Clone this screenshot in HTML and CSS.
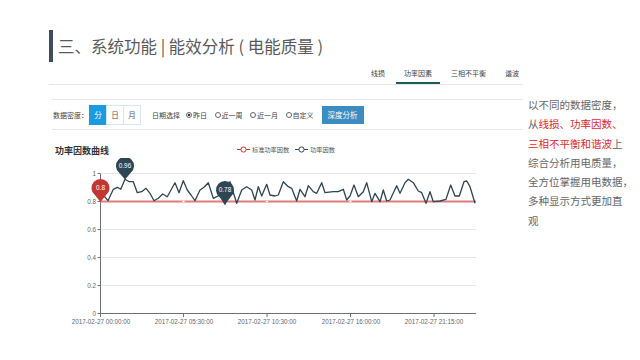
FILE: index.html
```html
<!DOCTYPE html>
<html lang="zh">
<head>
  <meta charset="UTF-8">
  <title>能效分析</title>
  <link rel="stylesheet" href="styles.css">
</head>
<body>
  <h1 class="title">三、系统功能 | 能效分析 ( 电能质量 )</h1>
  <div class="main">
    <section class="panel">
      <nav class="tabs">
        <span class="tab">线损</span>
        <span class="tab active">功率因素</span>
        <span class="tab">三相不平衡</span>
        <span class="tab">谐波</span>
      </nav>
      <div class="toolbar">
        <span class="label">数据密度：</span>
        <div class="density">
          <span class="seg on">分</span><span class="seg">日</span><span class="seg">月</span>
        </div>
        <span class="label date-label">日期选择</span>
        <span class="radio checked">昨日</span>
        <span class="radio">近一周</span>
        <span class="radio">近一月</span>
        <span class="radio">自定义</span>
        <button class="btn-analyze">深度分析</button>
      </div>
      <div class="chart">
        <div class="chart-head">
          <h3>功率因数曲线</h3>
          <div class="legend">
            <span class="legend-item">
              <svg width="13" height="7" viewBox="0 0 13 7"><line x1="0" y1="3.5" x2="13" y2="3.5" stroke="#c23531"/><circle cx="6.5" cy="3.5" r="2.6" fill="#fff" stroke="#c23531"/></svg>
              标准功率因数
            </span>
            <span class="legend-item">
              <svg width="13" height="7" viewBox="0 0 13 7"><line x1="0" y1="3.5" x2="13" y2="3.5" stroke="#2f4554"/><circle cx="6.5" cy="3.5" r="2.6" fill="#fff" stroke="#2f4554"/></svg>
              功率因数
            </span>
          </div>
        </div>
        <svg class="plot" width="474" height="177" viewBox="49 158 474 177">
          <g stroke="#e6e6e6" stroke-width="1">
            <line x1="101" y1="173.5" x2="476" y2="173.5"/>
            <line x1="101" y1="229.5" x2="476" y2="229.5"/>
            <line x1="101" y1="257.5" x2="476" y2="257.5"/>
            <line x1="101" y1="285.5" x2="476" y2="285.5"/>
          </g>
          <g stroke="#6e7079" stroke-width="1" fill="none">
            <path d="M100.5 173.5 V313.5 H476"/>
            <path d="M97.5 173.5 H100 M97.5 201.5 H100 M97.5 229.5 H100 M97.5 257.5 H100 M97.5 285.5 H100 M97.5 313.5 H100"/>
            <path d="M100.5 313.5 V317 M183.5 313.5 V317 M267 313.5 V317 M350.5 313.5 V317 M434 313.5 V317"/>
          </g>
          <g class="ylabels" text-anchor="end">
            <text x="96" y="175.7">1</text>
            <text x="96" y="203.7">0.8</text>
            <text x="96" y="231.7">0.6</text>
            <text x="96" y="259.7">0.4</text>
            <text x="96" y="287.7">0.2</text>
            <text x="96" y="315.7">0</text>
          </g>
          <g class="xlabels" text-anchor="middle">
            <text x="101" y="323.5">2017-02-27 00:00:00</text>
            <text x="184" y="323.5">2017-02-27 05:30:00</text>
            <text x="267" y="323.5">2017-02-27 10:30:00</text>
            <text x="351" y="323.5">2017-02-27 16:00:00</text>
            <text x="434" y="323.5">2017-02-27 21:15:00</text>
          </g>
          <line x1="100" y1="201.5" x2="476" y2="201.5" stroke="#e07c7a" stroke-width="2"/>
          <g fill="#fff" stroke="#f0b4b2" stroke-width="0.6">
            <circle cx="183.5" cy="201.5" r="1.2"/>
            <circle cx="267" cy="201.5" r="1.2"/>
            <circle cx="350.5" cy="201.5" r="1.2"/>
          </g>
          <polyline fill="none" stroke="#2f4554" stroke-width="1.3" stroke-linejoin="round"
            points="100,190 104,196 108,200.7 113.3,189.3 117.3,187.3 120.7,189.3 125,179.3 129.3,181.7 133.3,181.7 137.3,192.7 141.7,191.7 146,188.3 150,193.3 154,200.7 158.3,198.3 162.7,194 167.3,196.7 171,190 175,182.7 179,192.7 183.3,180.7 187.3,190 191,195 195,200.7 200,190 204,187.3 208.3,182.7 213.3,198.3 216.7,196.7 220,195 225,204.3 230,181.7 236.7,203.3 241.7,190 246.7,186.7 251.7,190 255,200 258.3,186.7 261.7,196 266.7,184.3 270,195 275,196 278.3,195 283.3,181.7 288.3,186.7 291.7,188.3 296.7,201 300,189.3 305,196.7 308.3,185.7 313.3,191.7 316.7,193.3 321.7,182.7 325,192.7 333.3,191.7 338.3,191.7 343.3,189.3 346.7,200 350,196 354,185 358.3,196.7 363.3,191.7 366.7,182.7 371.7,201.7 375,193.3 380,201.7 383.3,190 386.7,201 390,200 396.7,185.7 400,193.3 405,182.7 408.3,179.3 413.3,182.7 418.3,191 421.7,192.7 426,203.3 430,191.7 433.3,201.7 440,201 446,199.3 450.7,185 455,196 459.3,196 464,181.7 466.7,181 470,186.7 475,203.3"/>
          <g class="pin">
            <path d="M100.5 202 L94.9 195 A9 9 0 1 1 106.1 195 Z" fill="#c23531"/>
            <text x="100.5" y="190.4">0.8</text>
          </g>
          <g class="pin">
            <path d="M125 179.5 L119.4 173 A9 9 0 1 1 130.6 173 Z" fill="#2f4554"/>
            <text x="125" y="168.4">0.96</text>
          </g>
          <g class="pin">
            <path d="M225 204.5 L219.4 197 A9 9 0 1 1 230.6 197 Z" fill="#2f4554"/>
            <text x="225" y="192.4">0.78</text>
          </g>
        </svg>
      </div>
    </section>
    <p class="note">
      以不同的数据密度，<br>
      从<span class="hl">线损、功率因数、</span><br>
      <span class="hl">三相不平衡和谐波</span>上<br>
      综合分析用电质量，<br>
      全方位掌握用电数据，<br>
      多种显示方式更加直<br>
      观
    </p>
  </div>
</body>
</html>
```

FILE: styles.css
```css
body {
  margin: 0;
  background-color: #fff;
  color: #555;
  font-family: "Noto Sans CJK SC", "Noto Sans", sans-serif;
}
.title {
  margin: 30px 0 0 49px;
  height: 32px;
  padding-left: 5px;
  border-left: 4px solid #3f4d5f;
  font-size: 16.5px;
  font-weight: normal;
  line-height: 32px;
  color: #5a5a5a;
}
.main {
  display: flex;
  margin-left: 49px;
}
.panel {
  width: 474px;
  flex-shrink: 0;
}
.tabs {
  display: flex;
  justify-content: flex-end;
  border-bottom: 1px solid #e6e6e6;
  font-size: 7px;
}
.tab {
  box-sizing: border-box;
  height: 22px;
  padding: 0 8px;
  margin-left: 3px;
  line-height: 22px;
  color: #444;
}
.tab:last-child {
  padding-right: 4px;
}
.tab.active {
  border-bottom: 2px solid #1d5c5a;
}
.toolbar {
  display: flex;
  align-items: center;
  height: 29px;
  margin: 14px 0 0 3px;
  padding-left: 1px;
  border-top: 1px solid #e8e8e8;
  border-bottom: 1px solid #e8e8e8;
  font-size: 7px;
  color: #444;
}
.density {
  display: flex;
  margin-left: 1px;
}
.seg {
  box-sizing: border-box;
  width: 18px;
  height: 20px;
  margin-left: -1px;
  border: 1px solid #d3e7f5;
  display: flex;
  align-items: center;
  justify-content: center;
  font-size: 7.5px;
  color: #555;
}
.seg:first-child {
  margin-left: 0;
}
.seg.on {
  background-color: #1a9be0;
  border-color: #1a9be0;
  color: #fff;
}
.date-label {
  margin-left: 11px;
}
.radio {
  display: flex;
  align-items: center;
  gap: 1px;
  margin-left: 7.5px;
}
.date-label + .radio {
  margin-left: 6px;
}
.radio::before {
  content: "";
  box-sizing: border-box;
  width: 6px;
  height: 6px;
  border: 1px solid #666;
  border-radius: 50%;
  background-color: #fff;
}
.radio.checked::before {
  background: radial-gradient(circle, #333 0 1.4px, #fff 1.6px);
}
.btn-analyze {
  height: 18px;
  margin-left: 8px;
  padding: 0 6px;
  border: none;
  background-color: #3b8cc0;
  color: #fff;
  font-family: inherit;
  font-size: 7.5px;
}
.chart-head {
  display: grid;
  grid-template-columns: 1fr auto 1fr;
  align-items: center;
  height: 14px;
  margin-top: 14px;
}
.chart-head h3 {
  margin: 0;
  padding-left: 6px;
  font-size: 9px;
  font-weight: bold;
  line-height: 14px;
  color: #333;
}
.legend {
  display: flex;
  align-items: center;
  gap: 6px;
  align-self: start;
  margin-top: 1px;
  font-size: 6.2px;
  color: #555;
}
.legend-item {
  display: flex;
  align-items: center;
  gap: 2px;
}
.legend-item svg {
  display: block;
}
.plot {
  display: block;
}
.plot text {
  font-family: "Liberation Sans", sans-serif;
  font-size: 6.3px;
  fill: #666;
}
.pin text {
  text-anchor: middle;
  font-size: 6.4px;
  fill: #fff;
}
.note {
  margin: 33px 0 0 5px;
  font-size: 10.5px;
  line-height: 19.3px;
  color: #666;
  white-space: nowrap;
}
.hl {
  color: #e5262a;
}
```
